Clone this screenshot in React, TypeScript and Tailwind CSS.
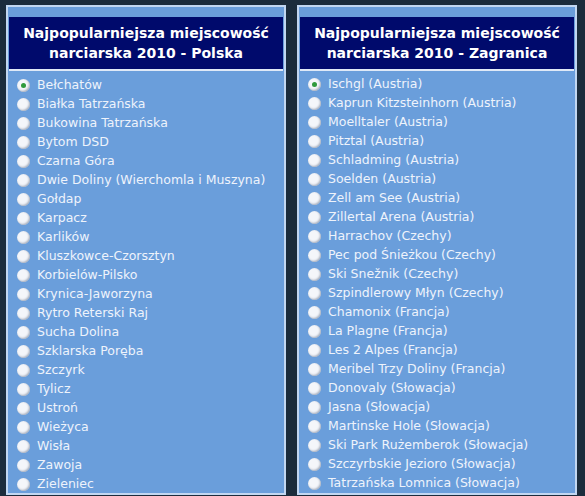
import React from "react";

const polska = [
  "Bełchatów",
  "Białka Tatrzańska",
  "Bukowina Tatrzańska",
  "Bytom DSD",
  "Czarna Góra",
  "Dwie Doliny (Wierchomla i Muszyna)",
  "Gołdap",
  "Karpacz",
  "Karlików",
  "Kluszkowce-Czorsztyn",
  "Korbielów-Pilsko",
  "Krynica-Jaworzyna",
  "Rytro Reterski Raj",
  "Sucha Dolina",
  "Szklarska Poręba",
  "Szczyrk",
  "Tylicz",
  "Ustroń",
  "Wieżyca",
  "Wisła",
  "Zawoja",
  "Zieleniec",
];

const zagranica = [
  "Ischgl (Austria)",
  "Kaprun Kitzsteinhorn (Austria)",
  "Moelltaler (Austria)",
  "Pitztal (Austria)",
  "Schladming (Austria)",
  "Soelden (Austria)",
  "Zell am See (Austria)",
  "Zillertal Arena (Austria)",
  "Harrachov (Czechy)",
  "Pec pod Śnieżkou (Czechy)",
  "Ski Snežnik (Czechy)",
  "Szpindlerowy Młyn (Czechy)",
  "Chamonix (Francja)",
  "La Plagne (Francja)",
  "Les 2 Alpes (Francja)",
  "Meribel Trzy Doliny (Francja)",
  "Donovaly (Słowacja)",
  "Jasna (Słowacja)",
  "Martinske Hole (Słowacja)",
  "Ski Park Rużemberok (Słowacja)",
  "Szczyrbskie Jezioro (Słowacja)",
  "Tatrzańska Lomnica (Słowacja)",
];

function Radio({ checked }: { checked?: boolean }) {
  return (
    <span className="w-[13px] h-[13px] rounded-full bg-[#f4f6fa] shadow-[inset_-1px_-1px_2px_rgba(120,130,150,0.6)] flex items-center justify-center shrink-0">
      {checked && <span className="w-[5px] h-[5px] rounded-full bg-[#2f9a3c]" />}
    </span>
  );
}

function Panel({ title, items, listTop }: { title: string[]; items: string[]; listTop: string }) {
  return (
    <div className="w-[280px] h-[490px] border-2 border-[#c2d7f1] bg-[#6a9edb] pt-[10px] px-[1px] overflow-hidden shrink-0">
      <div className="h-[54px] bg-[#000a6c] border-b-2 border-[#dfe9f7] flex flex-col items-center justify-center text-white font-bold text-[14px] leading-[20px]">
        {title.map((t) => (
          <div key={t}>{t}</div>
        ))}
      </div>
      <div className={listTop}>
        {items.map((name, i) => (
          <div key={name} className="h-[19px] flex items-center pl-[8px] gap-[7px] text-[12.5px] text-[#eef3fb]">
            <Radio checked={i === 0} />
            <span>{name}</span>
          </div>
        ))}
      </div>
    </div>
  );
}

export default function App() {
  return (
    <div
      className="w-[585px] h-[496px] bg-[#1b2c3c] overflow-hidden flex gap-[11px] pl-[6px] pt-[5px]"
      style={{ fontFamily: '"DejaVu Sans", Verdana, sans-serif' }}
    >
      <Panel title={["Najpopularniejsza miejscowość", "narciarska 2010 - Polska"]} items={polska} listTop="pt-[5px]" />
      <Panel title={["Najpopularniejsza miejscowość", "narciarska 2010 - Zagranica"]} items={zagranica} listTop="pt-[4px]" />
    </div>
  );
}
